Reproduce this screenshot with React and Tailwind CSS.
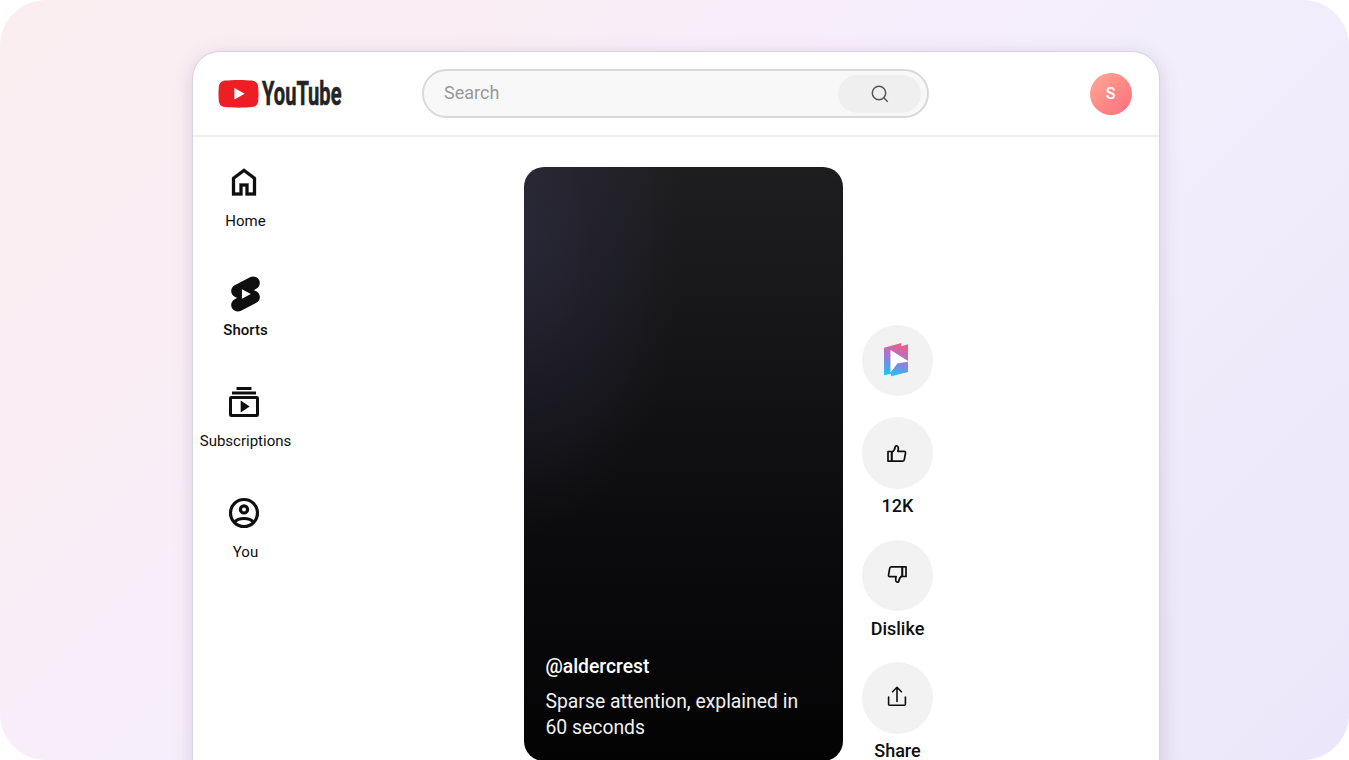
import React from "react";

const HomeIcon = () => (
  <svg viewBox="0 0 24 24" className="w-9 h-9" fill="currentColor">
    <path d="M6 19h3v-6h6v6h3v-9l-6-4.5L6 10v9Zm-2 2V9l8-6 8 6v12h-7v-6h-2v6H4Z" stroke="currentColor" strokeWidth="0.2" />
  </svg>
);

const ShortsIcon = () => (
  <svg viewBox="0 0 24 24" className="w-[43px] h-[42px] shrink-0" preserveAspectRatio="none" fill="currentColor">
    <path d="M17.77 10.32l-1.2-.5L18 9.06c1.84-.96 2.53-3.23 1.56-5.06s-3.24-2.53-5.07-1.56L6 6.94c-1.29.68-2.07 2.04-2 3.49.07 1.42.93 2.67 2.22 3.25.03.01 1.2.5 1.2.5L6 14.93c-1.83.97-2.53 3.24-1.56 5.07.97 1.83 3.24 2.53 5.07 1.56l8.5-4.5c1.29-.68 2.06-2.04 1.99-3.49-.07-1.42-.94-2.68-2.23-3.25zM10 14.65v-5.3L15 12l-5 2.65z" />
  </svg>
);

const SubscriptionsIcon = () => (
  <svg viewBox="0 0 24 24" className="w-9 h-9" fill="currentColor">
    <path d="M7 2h10v2H7zM4 5h16v2H4z" />
    <path d="M3.5 8h17A1.5 1.5 0 0 1 22 9.5v11a1.5 1.5 0 0 1-1.5 1.5h-17A1.5 1.5 0 0 1 2 20.5v-11A1.5 1.5 0 0 1 3.5 8ZM4 10v10h16V10H4Z" fillRule="evenodd" />
    <path d="M9.8 11v8l6-4z" />
  </svg>
);

const YouIcon = () => (
  <svg viewBox="0 0 24 24" className="w-9 h-9" fill="none" stroke="currentColor" strokeWidth="2.1">
    <circle cx="12" cy="12" r="9" />
    <circle cx="12" cy="9.6" r="2.4" />
    <path d="M5.3 18.3c1.7-1.8 4-2.6 6.7-2.6s5 .8 6.7 2.6" />
  </svg>
);

const ThumbIcon = ({ className }) => (
  <svg viewBox="0 0 24 24" className={className} fill="none" stroke="currentColor" strokeWidth="1.7" strokeLinejoin="round">
    <path d="M3 10.5h3.7v9.6H3z" />
    <path d="M6.7 11.3C9 10 9.9 8.3 10.2 5.9c.2-1.7 2.9-1.4 3.1.9.1 1.5-.1 2.6-.5 3.5h6.3c1 0 1.600.8 1.400 1.700l-1.200 6.600c-.2.900-.9 1.500-1.800 1.500H6.700z" />
  </svg>
);

const ShareIcon = () => (
  <svg viewBox="0 0 24 24" className="w-6 h-6" fill="none" stroke="currentColor" strokeWidth="1.6" strokeLinecap="round" strokeLinejoin="round">
    <path d="M12 16.5V2.6M7.6 6.8 12 2.3l4.4 4.5" />
    <path d="M3.6 12v7.3c0 .6.4 1 1 1h14.8c.6 0 1-.4 1-1V12" />
  </svg>
);

const ClipLogo = () => (
  <svg viewBox="96 81 96 108" className="w-8 h-9">
    <defs>
      <linearGradient id="clip" x1="0.6" y1="0" x2="0.35" y2="1">
        <stop offset="0" stopColor="#ee5f80" />
        <stop offset="0.45" stopColor="#a874d6" />
        <stop offset="0.75" stopColor="#5a9cec" />
        <stop offset="1" stopColor="#1cc8ee" />
      </linearGradient>
    </defs>
    <path d="M105 98 157 84v10l20-6v83l-51 13v-8l-21 5z" fill="url(#clip)" />
    <path d="M125 106 180 140l-35 5-20 27z" fill="#f2f2f2" />
    <path d="M125 106 177 138l-32 7-20 27z" fill="#fff" />
  </svg>
);

const navItems = [
  { label: "Home", icon: <HomeIcon />, style: "h-[110px]", iconBox: "mr-[3px]", text: "mt-[11px]" },
  { label: "Shorts", icon: <ShortsIcon />, style: "h-[110px]", iconBox: "pt-[3px]", text: "mt-[10px] font-medium" },
  { label: "Subscriptions", icon: <SubscriptionsIcon />, style: "h-[111px]", iconBox: "mr-[3px]", text: "mt-[11px]" },
  { label: "You", icon: <YouIcon />, style: "h-[110px]", iconBox: "mr-[3px]", text: "mt-[11px]" },
];

const actions = [
  { label: "12K", icon: <ThumbIcon className="w-6 h-6" />, circle: "h-[72px]", text: "mt-[5px]" },
  { label: "Dislike", icon: <ThumbIcon className="w-6 h-6 rotate-180" />, circle: "h-[71px] pb-[2px]", text: "mt-[6px]" },
  { label: "Share", icon: <ShareIcon />, circle: "-mt-px h-[72px] pb-[2px]", text: "mt-[5px]" },
];

const Header = () => (
  <header className="flex h-[85px] shrink-0 items-center border-b-2 border-[#efefef] pl-[26px] pr-[27.5px]">
    <svg viewBox="0 0 126 30" className="w-[126px] h-[30px] shrink-0 overflow-visible">
      <path d="M6 1.6C12 .7 27 .7 33 1.6c4 .6 6 3 6.2 6.5.4 4.6.4 9.2 0 13.8-.3 3.5-2.2 5.600-6.200 6.200-7 .8-20 .8-27 0-4-.6-5.900-2.700-6.200-6.200-.4-4.600-.4-9.200 0-13.800C.1 4.600 2 2.200 6 1.600Z" fill="#ed1f24" />
      <path d="M15.400 9v11.600l10.300-5.800z" fill="#fff" />
      <text x="43" y="26" textLength="79.500" lengthAdjust="spacingAndGlyphs" fontFamily="Roboto, sans-serif" fontSize="33" fontWeight="700" fill="#242424" stroke="#242424" strokeWidth="0.6">YouTube</text>
    </svg>

    <div className="ml-[77px] flex h-[49px] w-[507px] items-center rounded-full border-2 border-[#d9d9d9] bg-[#f8f8f8] pl-[20px] pr-[6px]">
      <span className="flex-1 pb-px text-[18px] leading-6 text-[#999]">Search</span>
      <div className="flex h-[38px] w-[83px] items-center justify-center rounded-full bg-[#efefef]">
        <svg viewBox="0 0 20 20" className="w-5 h-5" fill="none" stroke="#555" strokeWidth="1.5">
          <circle cx="9" cy="9" r="6.7" />
          <path d="m13.8 13.8 3.9 3.9" />
        </svg>
      </div>
    </div>

    <div className="ml-auto flex h-[42px] w-[42px] items-center justify-center rounded-full bg-linear-135 from-[#ffa892] to-[#ff6b7d] text-base font-medium text-white">
      S
    </div>
  </header>
);

const App = () => {
  return (
    <div className="h-[760px] w-full overflow-hidden bg-white font-['Roboto',sans-serif] text-[#0f0f0f]">
      <div className="h-[760px] overflow-hidden rounded-[46px] bg-[linear-gradient(135deg,#fbeef1_0%,#faeef5_25%,#f7eefc_43%,#f3eefc_58%,#ebe6f9_100%)] pl-[192px] pt-[51px]">
        <div className="flex h-[740px] w-[968px] flex-col overflow-hidden rounded-[28px] border border-[#d9d3dc] bg-white shadow-[0_4px_20px_rgba(60,40,90,0.16)]">
          <Header />

          <div className="flex flex-1 items-start">
            {/* Sidebar */}
            <nav className="flex w-[105px] flex-col pt-[27px]">
              {navItems.map((item) => (
                <div key={item.label} className={`flex flex-col items-center ${item.style}`}>
                  <div className={`flex h-9 items-center ${item.iconBox}`}>{item.icon}</div>
                  <span className={`text-[15px] leading-5 ${item.text}`}>{item.label}</span>
                </div>
              ))}
            </nav>

            {/* Short */}
            <div className="ml-[226px] mt-[30px] flex h-[594px] w-[319px] flex-col justify-end rounded-[20px] bg-[radial-gradient(ellipse_50%_50%_at_0%_12%,rgba(60,56,90,0.42),transparent),linear-gradient(180deg,#1e1e20_0%,#0c0c0e_60%,#030304_100%)] px-[21.5px] pb-[20px] text-white">
              <p className="text-[19.3px] font-medium leading-6">@aldercrest</p>
              <p className="mt-[10px] w-[270px] text-[19.35px] leading-[26px] text-[#f1f1f1]">Sparse attention, explained in 60 seconds</p>
            </div>

            {/* Actions */}
            <div className="ml-[18.5px] mt-[187.5px] flex w-[72px] flex-col items-center">
              <div className="mb-[21.5px] flex h-[71px] w-[71px] items-center justify-center rounded-full bg-[#f2f2f2] pr-px">
                <ClipLogo />
              </div>
              {actions.map((action) => (
                <div key={action.label} className="mb-[22px] flex flex-col items-center">
                  <div className={`flex w-[71px] items-center justify-center rounded-full bg-[#f2f2f2] pr-0.5 ${action.circle}`}>
                    {action.icon}
                  </div>
                  <span className={`text-[18px] font-medium leading-6 ${action.text}`}>{action.label}</span>
                </div>
              ))}
            </div>
          </div>
        </div>
      </div>
    </div>
  );
};

export default App;
